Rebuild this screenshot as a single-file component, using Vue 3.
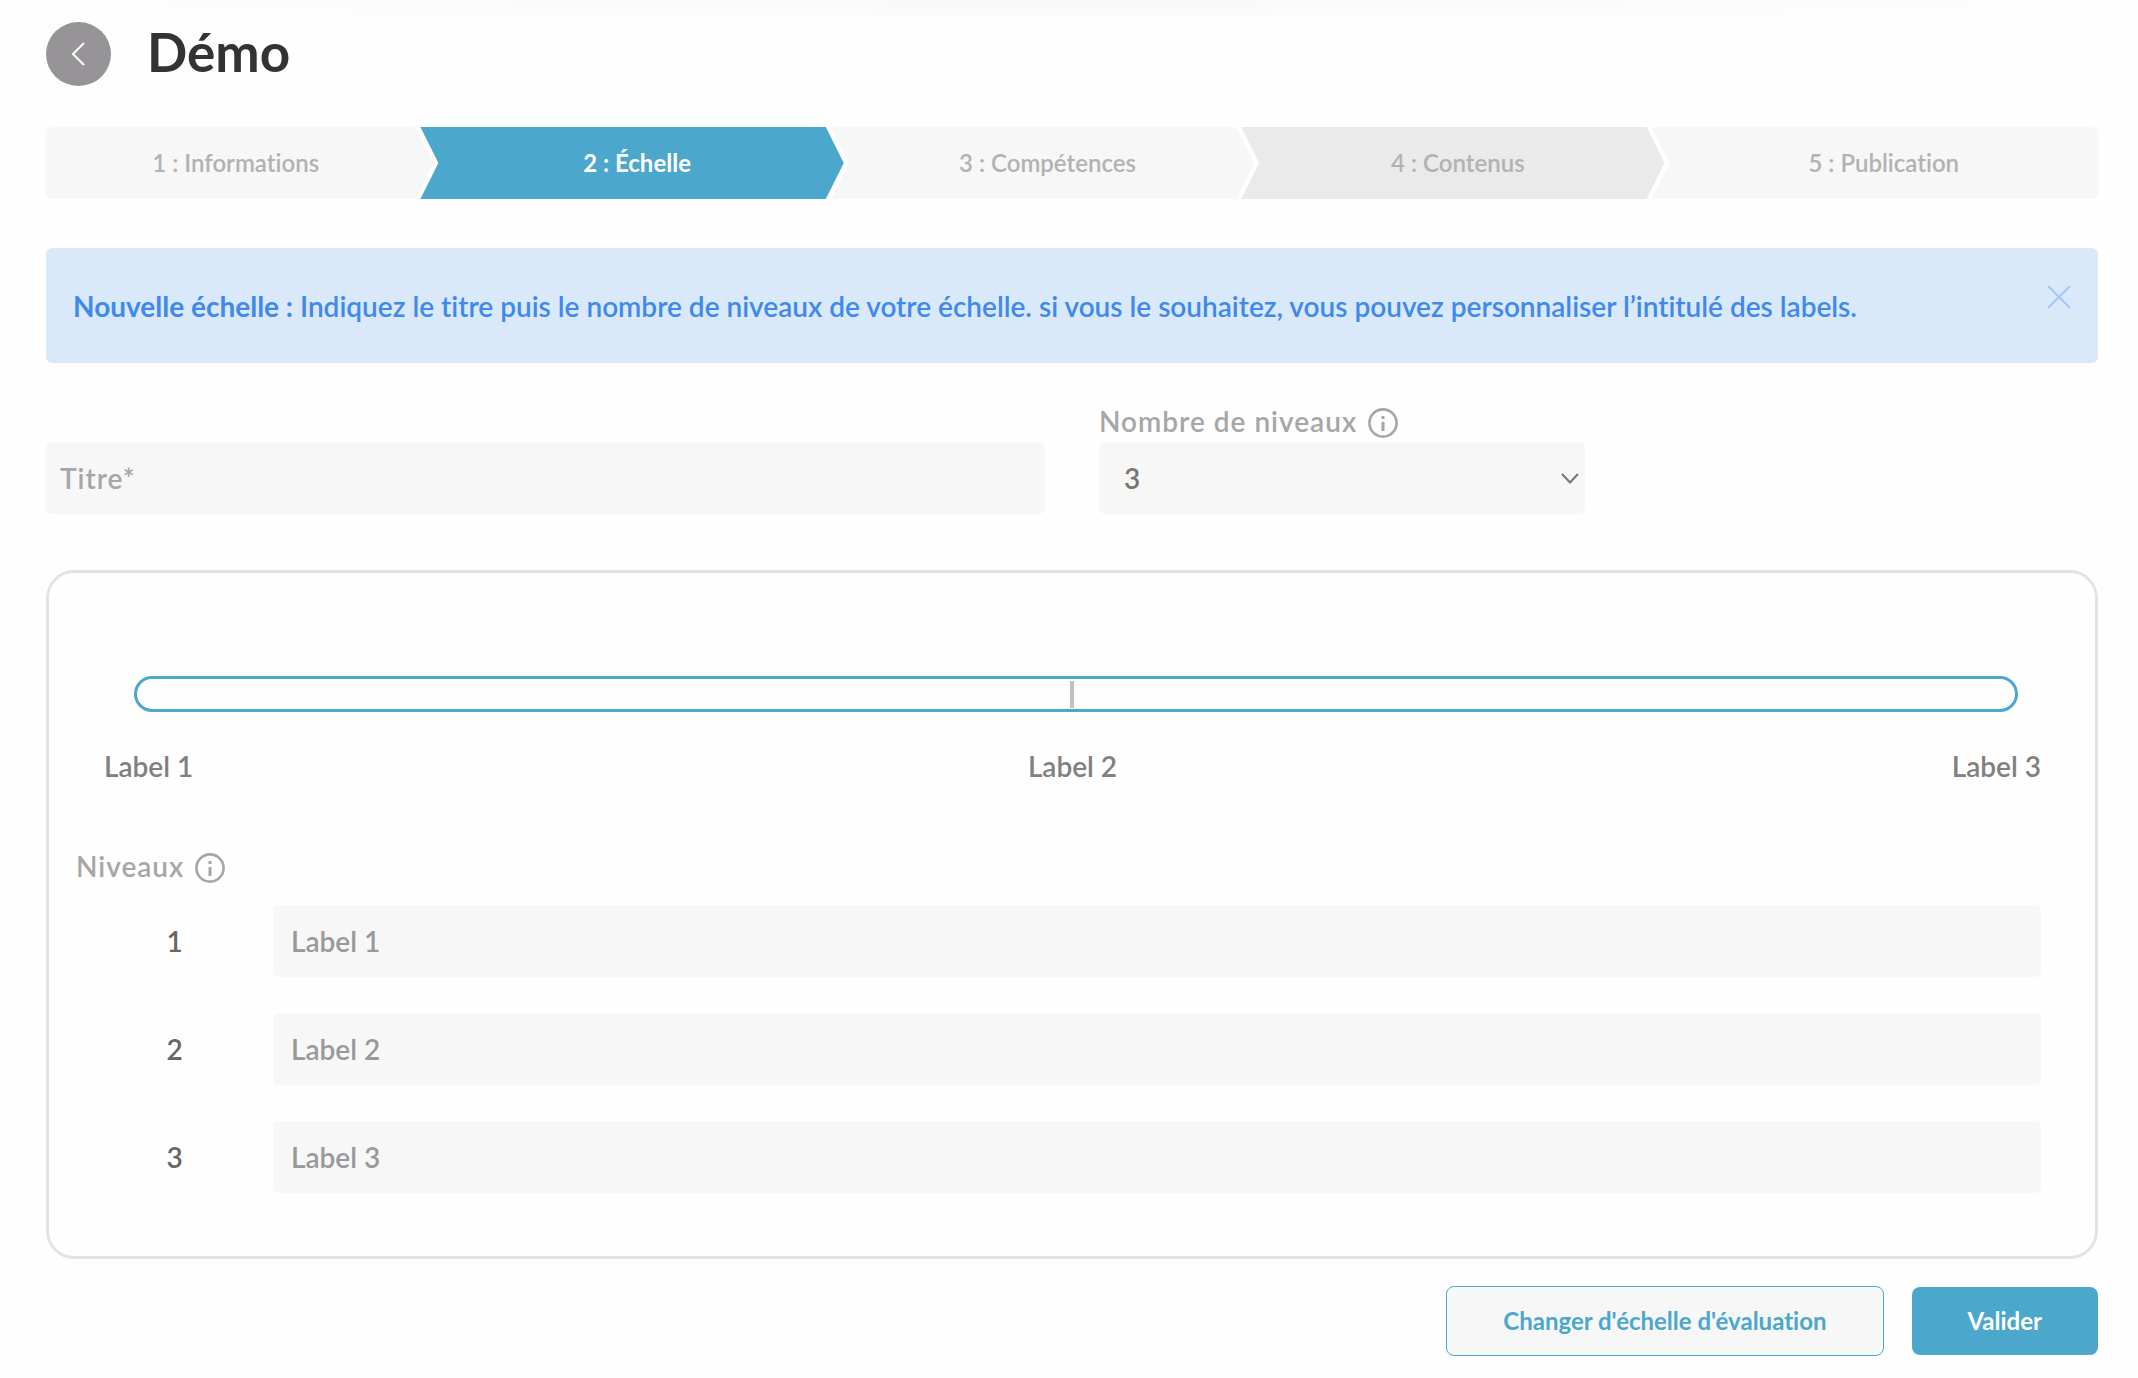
<script setup>
import { ref } from 'vue'

const steps = ['1 : Informations', '2 : Échelle', '3 : Compétences', '4 : Contenus', '5 : Publication']
const activeStep = 1
const title = ref('')
const count = ref(3)
const levels = [1, 2, 3]
const showNotice = ref(true)
</script>

<template>
  <main class="page">
    <header class="heading">
      <button class="back" type="button" aria-label="Retour">
        <svg width="16" height="24" viewBox="0 0 16 24" fill="none" stroke="#fff" stroke-width="2">
          <path d="M13 1 2 12l11 11" />
        </svg>
      </button>
      <h1>Démo</h1>
    </header>

    <ol class="steps">
      <li v-for="(step, i) in steps" :key="step" :class="{ active: i === activeStep }">{{ step }}</li>
    </ol>

    <section v-if="showNotice" class="notice">
      <p><strong>Nouvelle échelle :</strong> Indiquez le titre puis le nombre de niveaux de votre échelle. si vous le souhaitez, vous pouvez personnaliser l’intitulé des labels.</p>
      <button class="close" type="button" aria-label="Fermer" @click="showNotice = false">
        <svg width="24" height="24" viewBox="0 0 24 24" fill="none" stroke="#a3c6f5" stroke-width="2">
          <path d="M1 1l22 22M23 1 1 23" />
        </svg>
      </button>
    </section>

    <form class="form" @submit.prevent>
      <div class="fields">
        <input v-model="title" class="field title" type="text" placeholder="Titre*" aria-label="Titre" />
        <div class="count">
          <div class="caption">
            <label for="count">Nombre de niveaux</label>
            <svg class="info" width="30" height="30" viewBox="0 0 30 30" fill="none" stroke="#a6a6a6">
              <circle cx="15" cy="15" r="13.6" stroke-width="2.6" />
              <path d="M15 8v3M15 14v9" stroke-width="3" />
            </svg>
          </div>
          <div class="select">
            <select id="count" v-model="count" class="field">
              <option v-for="n in 5" :key="n" :value="n">{{ n }}</option>
            </select>
            <svg width="18" height="11" viewBox="0 0 18 11" fill="none" stroke="#757575" stroke-width="2">
              <path d="M1 1l8 8.500 8-8.500" />
            </svg>
          </div>
        </div>
      </div>

      <section class="card">
        <div class="scale">
          <div class="bar"><span class="tick"></span></div>
          <div class="marks">
            <span v-for="n in levels" :key="n">Label {{ n }}</span>
          </div>
        </div>
        <div class="caption levels-caption">
          <span>Niveaux</span>
          <svg class="info" width="30" height="30" viewBox="0 0 30 30" fill="none" stroke="#a6a6a6">
            <circle cx="15" cy="15" r="13.6" stroke-width="2.6" />
            <path d="M15 8v3M15 14v9" stroke-width="3" />
          </svg>
        </div>
        <div class="levels">
          <div v-for="n in levels" :key="n" class="level">
            <label :for="'level-' + n">{{ n }}</label>
            <input :id="'level-' + n" class="field" type="text" :placeholder="'Label ' + n" />
          </div>
        </div>
      </section>

      <footer class="actions">
        <button class="outline" type="button">Changer d'échelle d'évaluation</button>
        <button class="primary" type="submit">Valider</button>
      </footer>
    </form>
  </main>
</template>

<style>
body {
  background: #fefefe;
}
</style>

<style scoped>
* {
  box-sizing: border-box;
}

.page {
  padding: 22px 40px 22px 46px;
  font: 600 28px/32px Lato, sans-serif;
  font-variant-ligatures: none;
  color: #808080;
  background: radial-gradient(ellipse 52% 24px at 50% 0, #f8f8f8, #fefefe) no-repeat;
}

button,
input,
select {
  font: inherit;
  font-variant-ligatures: none;
}

.heading {
  display: flex;
  align-items: center;
  gap: 36px;
}

.back {
  display: grid;
  place-items: center;
  width: 65px;
  height: 64px;
  padding: 0;
  border: 0;
  border-radius: 50%;
  background: #969497;
}

h1 {
  margin: 0;
  padding-bottom: 4px;
  font-size: 53px;
  font-weight: 700;
  line-height: 60px;
  color: #333;
}

.steps {
  display: grid;
  grid-template-columns: calc(20% - 36px) repeat(3, 20%) calc(20% + 36px);
  margin: 41px 0 0;
  padding: 0;
  list-style: none;
  border-radius: 6px;
  overflow: hidden;
}

.steps li {
  margin-right: -13px;
  padding-left: 10px;
  font-size: 24px;
  line-height: 72px;
  text-align: center;
  color: #b2b2b2;
  background: #f7f7f7;
  clip-path: polygon(0 0, calc(100% - 18px) 0, 100% 50%, calc(100% - 18px) 100%, 0 100%, 18px 50%);
}

.steps li:nth-child(4) {
  background: #eaeaea;
}

.steps li:first-child {
  padding: 0 8px 0 0;
  clip-path: polygon(0 0, calc(100% - 18px) 0, 100% 50%, calc(100% - 18px) 100%, 0 100%);
}

.steps li:last-child {
  margin-right: 0;
  padding-left: 18px;
  clip-path: polygon(0 0, 100% 0, 100% 100%, 0 100%, 18px 50%);
}

.steps li.active {
  font-weight: 700;
  color: #fff;
  background: #4ba7cb;
}

.notice {
  display: flex;
  align-items: center;
  justify-content: space-between;
  min-height: 115px;
  margin-top: 49px;
  padding: 0 27px;
  border-radius: 6px;
  color: #3f89ec;
  background: #dae9fa;
}

.notice p {
  margin: 0;
}

.notice strong {
  font-weight: 700;
}

.close {
  display: flex;
  padding: 0 0 18px;
  border: 0;
  background: none;
}

.fields {
  display: grid;
  grid-template-columns: 999fr 486fr 459fr;
  align-items: end;
  gap: 54px;
  margin-top: 41px;
}

.field {
  display: block;
  width: 100%;
  height: 72px;
  padding: 0 18px;
  border: 0;
  border-radius: 6px;
  outline: 0;
  color: #757575;
  background: #f7f7f7;
}

.field::placeholder {
  color: #999;
  opacity: 1;
}

.title {
  padding: 0 14px;
  letter-spacing: 1px;
}

.title::placeholder {
  color: #a6a6a6;
}

.caption {
  display: flex;
  align-items: center;
  gap: 11px;
  letter-spacing: 1px;
  color: #a6a6a6;
}

.caption > :first-child {
  padding-bottom: 4px;
}

.count .caption {
  height: 38px;
}

.select {
  display: grid;
  align-items: center;
}

.select > * {
  grid-area: 1 / 1;
}

.select select {
  padding: 0 25px;
  appearance: none;
}

.select svg {
  justify-self: end;
  margin-right: 6px;
  pointer-events: none;
}

.card {
  margin-top: 56px;
  padding: 103px 54px 63px 27px;
  border: 3px solid #e3e2e8;
  border-radius: 28px;
}

.scale {
  padding-left: 28px;
}

.bar {
  display: flex;
  justify-content: center;
  align-items: center;
  height: 36px;
  margin: 0 23px 0 30px;
  padding-right: 8px;
  border: 3px solid #4ba7cb;
  border-radius: 18px;
}

.tick {
  width: 4px;
  height: 27px;
  background: #c1c1c1;
}

.marks {
  display: flex;
  justify-content: space-between;
  margin-top: 38px;
}

.levels-caption {
  margin-top: 68px;
}

.levels {
  display: grid;
  gap: 36px;
  margin-top: 19px;
}

.level {
  display: grid;
  grid-template-columns: 197px 1fr;
  align-items: center;
}

.level label {
  text-align: center;
  color: #666;
}

.actions {
  display: flex;
  justify-content: flex-end;
  align-items: center;
  gap: 28px;
  margin-top: 27px;
}

.actions button {
  height: 68px;
  padding: 0 56px;
  border: 0;
  border-radius: 8px;
  font-size: 24px;
  font-weight: 700;
}

.actions .outline {
  height: 70px;
  border: 1px solid #4ba7cb;
  color: #4ba7cb;
  background: #f7f7f7;
}

.actions .primary {
  color: #fff;
  background: #4ba7cb;
}
</style>
